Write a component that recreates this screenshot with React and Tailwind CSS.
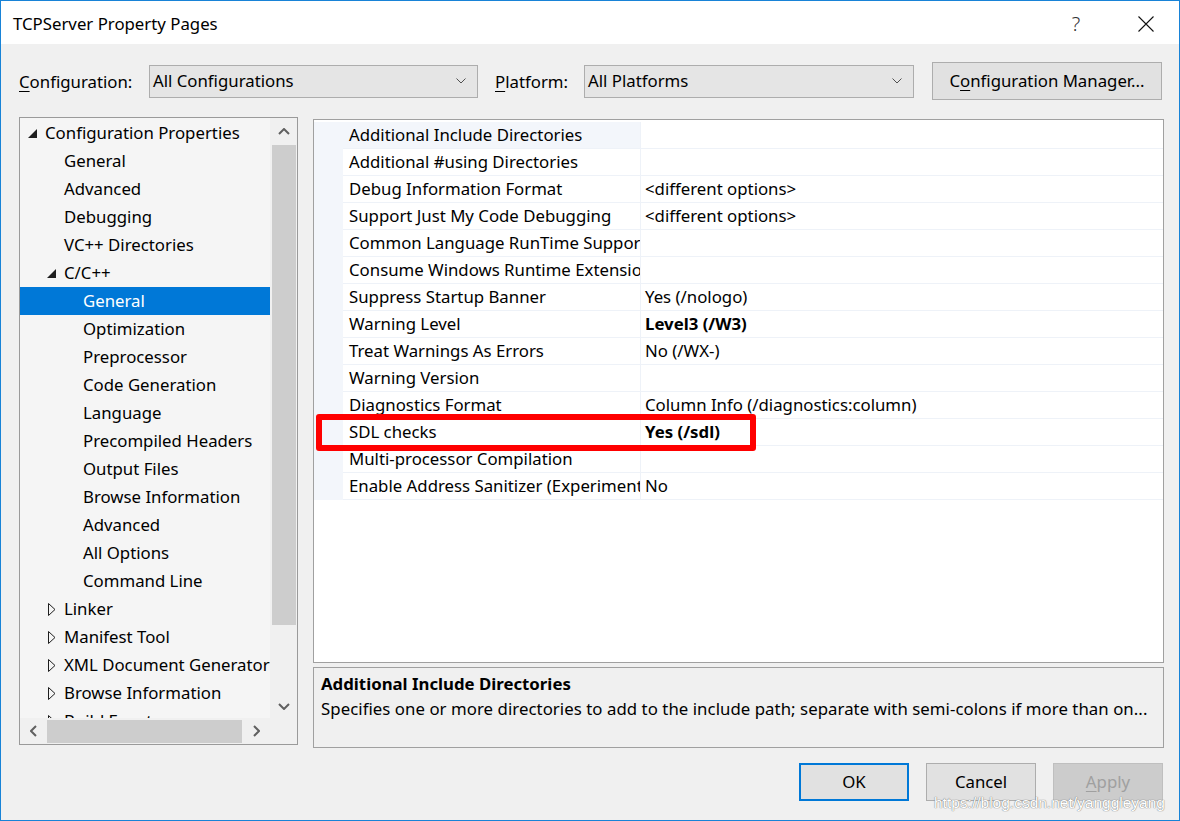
import React from "react"

const treeItems = [
  { label: "Configuration Properties", level: 0, state: "open" },
  { label: "General", level: 1 },
  { label: "Advanced", level: 1 },
  { label: "Debugging", level: 1 },
  { label: "VC++ Directories", level: 1 },
  { label: "C/C++", level: 1, state: "open" },
  { label: "General", level: 2, selected: true },
  { label: "Optimization", level: 2 },
  { label: "Preprocessor", level: 2 },
  { label: "Code Generation", level: 2 },
  { label: "Language", level: 2 },
  { label: "Precompiled Headers", level: 2 },
  { label: "Output Files", level: 2 },
  { label: "Browse Information", level: 2 },
  { label: "Advanced", level: 2 },
  { label: "All Options", level: 2 },
  { label: "Command Line", level: 2 },
  { label: "Linker", level: 1, state: "closed" },
  { label: "Manifest Tool", level: 1, state: "closed" },
  { label: "XML Document Generator", level: 1, state: "closed" },
  { label: "Browse Information", level: 1, state: "closed" },
  { label: "Build Events", level: 1, state: "closed" },
]

const props = [
  ["Additional Include Directories", ""],
  ["Additional #using Directories", ""],
  ["Debug Information Format", "<different options>"],
  ["Support Just My Code Debugging", "<different options>"],
  ["Common Language RunTime Support", ""],
  ["Consume Windows Runtime Extension", ""],
  ["Suppress Startup Banner", "Yes (/nologo)"],
  ["Warning Level", "Level3 (/W3)", true],
  ["Treat Warnings As Errors", "No (/WX-)"],
  ["Warning Version", ""],
  ["Diagnostics Format", "Column Info (/diagnostics:column)"],
  ["SDL checks", "Yes (/sdl)", true],
  ["Multi-processor Compilation", ""],
  ["Enable Address Sanitizer (Experimental)", "No"],
]

const indent = ["w-0", "w-[19px]", "w-[38px]"]

const Dropdown = ({ text, w }) => (
  <div className={`${w} h-[33px] bg-[#e5e5e5] border border-[#adadad] flex items-center pl-[3px] pr-[11px]`}>
    <span className="flex-1">{text}</span>
    <svg viewBox="0 0 10 6" className="w-[10px] h-[6px] text-[#505050]" fill="none">
      <path d="M0.5 0.5 L5 5 L9.5 0.5" stroke="currentColor" strokeWidth="1" />
    </svg>
  </div>
)

const TreeRow = ({ item }) => (
  <div className={`h-[28px] flex items-center whitespace-nowrap ${item.selected ? "bg-[#0078d7] text-white" : ""}`}>
    <div className={`shrink-0 ${indent[item.level]}`} />
    <div className={`shrink-0 w-[25px] flex items-center ${item.state === "closed" ? "pl-[9px]" : "pl-[8px]"}`}>
      {item.state === "open" && (
        <svg viewBox="0 0 9 9" className="w-[9px] h-[9px]">
          <polygon points="9,0 9,9 0,9" fill="#1e1e1e" />
        </svg>
      )}
      {item.state === "closed" && (
        <svg viewBox="0 0 8 13" className="w-[8px] h-[13px]">
          <polygon points="0.5,0.5 7,6.5 0.5,12.5" fill="none" stroke="#1e1e1e" strokeWidth="1" />
        </svg>
      )}
    </div>
    <span>{item.label}</span>
  </div>
)

const Arrow = ({ d, w, h }) => (
  <svg viewBox={`0 0 ${w} ${h}`} style={{ width: w, height: h }} fill="none">
    <path d={d} stroke="#606060" strokeWidth="2" />
  </svg>
)

export default function App() {
  return (
    <div className="relative w-[1180px] h-[821px] bg-[#f0f0f0] border border-[#1883d7] overflow-hidden text-[16.8px] text-black font-['Noto_Sans',sans-serif] leading-none">
      {/* title bar */}
      <div className="h-[43px] bg-white flex items-center pl-[12px] pt-[3px]">
        <span className="flex-1">TCPServer Property Pages</span>
        <span className="w-[20px] text-center text-[20px] font-light text-[#333]">?</span>
        <svg viewBox="0 0 16 16" className="ml-[52px] w-[16px] h-[16px]">
          <path d="M0.5 0.5 L15.5 15.5 M15.5 0.5 L0.5 15.5" stroke="#111" strokeWidth="1.1" />
        </svg>
        <div className="w-[25px]" />
      </div>

      {/* configuration row */}
      <div className="mt-[18px] h-[38px] flex items-center pl-[18px]">
        <span className="w-[130px] pt-[2px]"><span className="underline underline-offset-[3px]">C</span>onfiguration:</span>
        <Dropdown text="All Configurations" w="w-[329px]" />
        <span className="ml-[17px] w-[89px] pt-[2px]"><span className="underline underline-offset-[3px]">P</span>latform:</span>
        <Dropdown text="All Platforms" w="w-[330px]" />
        <button className="ml-[18px] w-[230px] h-[38px] bg-[#e1e1e1] border border-[#adadad] flex items-center justify-center">
          C<span className="underline underline-offset-[3px]">o</span>nfiguration Manager...
        </button>
      </div>

      {/* main area */}
      <div className="mt-[17px] flex pl-[18px] gap-[15px]">
        {/* tree */}
        <div className="w-[279px] h-[628px] border border-[#9a9a9a] flex flex-col">
          <div className="flex flex-1 min-h-0">
            <div className="w-[250px] bg-[#f5f5f5] overflow-hidden pt-px">
              {treeItems.map((item, i) => (
                <TreeRow key={i} item={item} />
              ))}
            </div>
            <div className="flex-1 bg-[#f0f0f0] flex flex-col items-center">
              <div className="h-[27px] flex items-center justify-center">
                <Arrow d="M1 6 L6 1 L11 6" w={12} h={7} />
              </div>
              <div className="w-[24px] h-[480px] bg-[#cdcdcd]" />
              <div className="flex-1 flex items-end justify-center pb-[8px]">
                <Arrow d="M1 1 L6 6 L11 1" w={12} h={7} />
              </div>
            </div>
          </div>
          <div className="h-[26px] flex items-center bg-[#f0f0f0]">
            <div className="w-[27px] flex justify-center">
              <Arrow d="M6 1 L1 6 L6 11" w={7} h={12} />
            </div>
            <div className="w-[195px] h-[23px] bg-[#cdcdcd]" />
            <div className="w-[28px] flex justify-center">
              <Arrow d="M1 1 L6 6 L1 11" w={7} h={12} />
            </div>
          </div>
        </div>

        {/* property grid + description */}
        <div className="w-[851px] mt-[2px] flex flex-col gap-[4px]">
          <div className="h-[544px] bg-white border border-[#a0a0a0] flex flex-col pt-[2px]">
            {props.map(([name, value, bold], i) => (
              <div key={i} className="h-[27px] flex">
                <div className="w-[29px] shrink-0 bg-[#f3f6fb]" />
                <div className={`w-[298px] shrink-0 border-b border-r border-[#eef2f8] pl-[6px] flex items-center overflow-hidden whitespace-nowrap ${i === 0 ? "bg-[#f3f6fb]" : ""}`}>
                  {name}
                </div>
                <div className={`flex-1 border-b border-[#eef2f8] pl-[4px] flex items-center whitespace-nowrap ${bold ? "font-bold" : ""}`}>
                  {value}
                </div>
              </div>
            ))}
          </div>
          <div className="h-[81px] border border-[#a0a0a0] bg-[#f0f0f0] pl-[7px] pt-[4px]">
            <div className="h-[24px] flex items-center font-bold">Additional Include Directories</div>
            <div className="h-[26px] flex items-center whitespace-nowrap overflow-hidden tracking-[0.05px]">
              Specifies one or more directories to add to the include path; separate with semi-colons if more than on...
            </div>
          </div>
        </div>
      </div>

      {/* buttons */}
      <div className="mt-[15px] flex justify-end pr-[16px] gap-[17px]">
        <button className="w-[110px] h-[38px] bg-[#e1e1e1] border-2 border-[#0078d7]">OK</button>
        <button className="w-[110px] h-[38px] bg-[#e1e1e1] border border-[#adadad]">Cancel</button>
        <button className="w-[110px] h-[38px] bg-[#cccccc] border border-[#bfbfbf] text-[#a0a0a0]">
          <span className="underline underline-offset-[3px]">A</span>pply
        </button>
      </div>

      {/* red highlight */}
      <div className="absolute left-[315px] top-[413px] w-[440px] h-[37px] border-[6px] border-[#ff0000] rounded-[3px]" />

      {/* watermark */}
      <div className="absolute left-[933px] top-[794px] text-[15.5px] font-['Liberation_Sans',sans-serif] text-white [text-shadow:0_0_1px_#7a7a7a,0_0_1px_#7a7a7a]">
        https://blog.csdn.net/yanggleyang
      </div>
    </div>
  )
}
